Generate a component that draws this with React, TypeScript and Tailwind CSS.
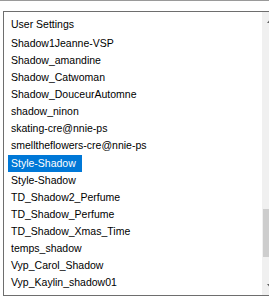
import React from "react";

const items = [
  "Shadow1Jeanne-VSP",
  "Shadow_amandine",
  "Shadow_Catwoman",
  "Shadow_DouceurAutomne",
  "shadow_ninon",
  "skating-cre@nnie-ps",
  "smelltheflowers-cre@nnie-ps",
  "Style-Shadow",
  "Style-Shadow",
  "TD_Shadow2_Perfume",
  "TD_Shadow_Perfume",
  "TD_Shadow_Xmas_Time",
  "temps_shadow",
  "Vyp_Carol_Shadow",
  "Vyp_Kaylin_shadow01",
  "Vyp_shadow_Julie",
];

const selectedIndex = 7;

const Arrow = ({ down }: { down?: boolean }) => (
  <svg width="8" height="5" viewBox="0 0 8 5" className="block">
    <path d={down ? "M0 0h8L4 5z" : "M0 5h8L4 0z"} fill="#606060" />
  </svg>
);

const App = () => {
  return (
    <div
      className="w-[269px] h-[299px] overflow-hidden bg-white"
      style={{ fontFamily: '"Liberation Sans", Arial, sans-serif' }}
    >
      <div className="h-px bg-[#9a9a9a]" />
      <div className="mt-[10px] ml-[3px] w-[277px] h-[285px] border border-[#6e6e6e] flex">
        <div className="flex-1 overflow-hidden pt-[2px] text-[10.5px] text-black">
          <div className="h-[21px] flex items-center pl-[7px] whitespace-nowrap">
            User Settings
          </div>
          {items.map((item, i) => (
            <div
              key={i}
              className="h-[17.14px] flex items-center pl-[4px] whitespace-nowrap"
            >
              <span
                className={
                  i === selectedIndex
                    ? "h-full flex items-center pl-[3px] pr-[6px] bg-[#0078d7] text-white"
                    : "pl-[3px]"
                }
              >
                {item}
              </span>
            </div>
          ))}
        </div>
        <div className="w-[17px] bg-[#f0f0f0] flex flex-col">
          <div className="h-[17px] flex items-center justify-center">
            <Arrow />
          </div>
          <div className="flex-1 px-px">
            <div className="mt-[180px] h-[48px] bg-[#cdcdcd]" />
          </div>
          <div className="h-[17px] flex items-center justify-center">
            <Arrow down />
          </div>
        </div>
      </div>
    </div>
  );
};

export default App;
